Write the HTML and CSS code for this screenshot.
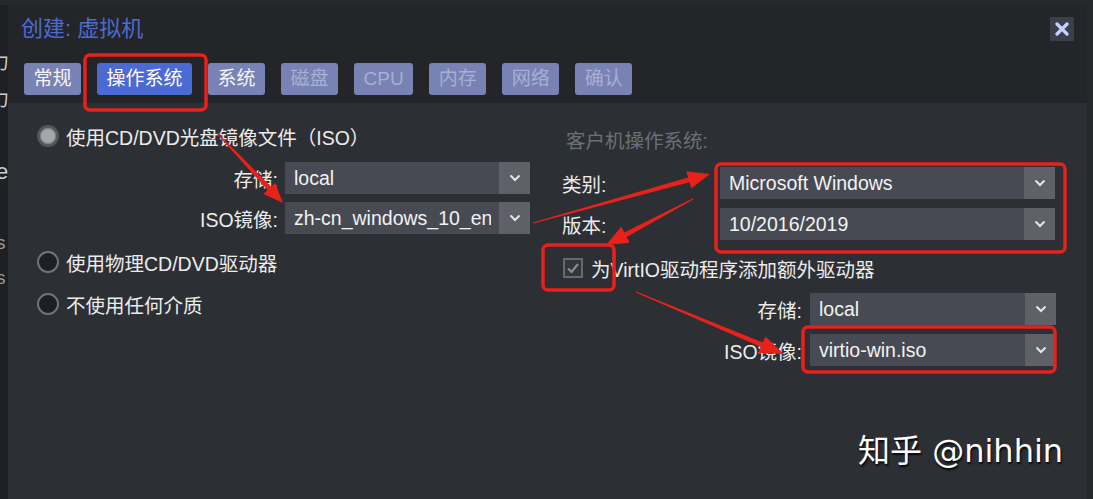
FILE: index.html
```html
<!DOCTYPE html>
<html lang="zh-CN">
<head>
<meta charset="utf-8">
<title>创建: 虚拟机</title>
<link rel="stylesheet" href="styles.css">
</head>
<body>
<div class="bg-strip">
  <span class="bg-glyph g1">力</span>
  <span class="bg-glyph g2">力</span>
  <span class="bg-glyph g3">e</span>
  <span class="bg-glyph g4">s</span>
  <span class="bg-glyph g5">s</span>
</div>
<div class="dialog">
  <div class="header">
    <div class="title-row">
      <span class="title">创建: 虚拟机</span>
      <button class="close" aria-label="close">
        <svg width="14" height="14" viewBox="0 0 14 14"><path d="M2 2 L12 12 M12 2 L2 12" stroke="#c4d2ff" stroke-width="3.2" stroke-linecap="round"/></svg>
      </button>
    </div>
    <div class="tabs">
      <span class="tab">常规</span>
      <span class="tab active">操作系统</span>
      <span class="tab">系统</span>
      <span class="tab disabled">磁盘</span>
      <span class="tab disabled">CPU</span>
      <span class="tab disabled">内存</span>
      <span class="tab disabled">网络</span>
      <span class="tab disabled">确认</span>
    </div>
  </div>
  <div class="body">
    <div class="col-left">
      <div class="radio-row first">
        <span class="radio checked"></span>
        <span>使用CD/DVD光盘镜像文件（ISO）</span>
      </div>
      <div class="form-row r-storage">
        <span class="label">存储:</span>
        <div class="select w245"><span class="val">local</span><span class="btn"><svg width="12" height="8" viewBox="0 0 12 8"><path d="M1.5 1.5 L6 6 L10.5 1.5" fill="none" stroke="#e6e6e6" stroke-width="2"/></svg></span></div>
      </div>
      <div class="form-row r-iso">
        <span class="label">ISO镜像:</span>
        <div class="select w245"><span class="val">zh-cn_windows_10_en</span><span class="btn"><svg width="12" height="8" viewBox="0 0 12 8"><path d="M1.5 1.5 L6 6 L10.5 1.5" fill="none" stroke="#e6e6e6" stroke-width="2"/></svg></span></div>
      </div>
      <div class="radio-row r2">
        <span class="radio"></span>
        <span>使用物理CD/DVD驱动器</span>
      </div>
      <div class="radio-row r3">
        <span class="radio"></span>
        <span>不使用任何介质</span>
      </div>
    </div>
    <div class="col-right">
      <div class="section-label">客户机操作系统:</div>
      <div class="kv-row k1">
        <span class="klabel">类别:</span>
        <div class="select w335"><span class="val">Microsoft Windows</span><span class="btn"><svg width="12" height="8" viewBox="0 0 12 8"><path d="M1.5 1.5 L6 6 L10.5 1.5" fill="none" stroke="#e6e6e6" stroke-width="2"/></svg></span></div>
      </div>
      <div class="kv-row k2">
        <span class="klabel">版本:</span>
        <div class="select w335"><span class="val">10/2016/2019</span><span class="btn"><svg width="12" height="8" viewBox="0 0 12 8"><path d="M1.5 1.5 L6 6 L10.5 1.5" fill="none" stroke="#e6e6e6" stroke-width="2"/></svg></span></div>
      </div>
      <div class="check-row">
        <span class="checkbox"><svg width="16" height="16" viewBox="0 0 16 16"><path d="M3 8.5 L6.5 12 L13 4" fill="none" stroke="#8d9095" stroke-width="2"/></svg></span>
        <span>为VirtIO驱动程序添加额外驱动器</span>
      </div>
      <div class="sub-row s1">
        <span class="label">存储:</span>
        <div class="select w246"><span class="val">local</span><span class="btn"><svg width="12" height="8" viewBox="0 0 12 8"><path d="M1.5 1.5 L6 6 L10.5 1.5" fill="none" stroke="#e6e6e6" stroke-width="2"/></svg></span></div>
      </div>
      <div class="sub-row s2">
        <span class="label">ISO镜像:</span>
        <div class="select w246"><span class="val">virtio-win.iso</span><span class="btn"><svg width="12" height="8" viewBox="0 0 12 8"><path d="M1.5 1.5 L6 6 L10.5 1.5" fill="none" stroke="#e6e6e6" stroke-width="2"/></svg></span></div>
      </div>
    </div>
  </div>
</div>
<div class="watermark">知乎 @nihhin</div>
<svg class="annot" width="1093" height="499" viewBox="0 0 1093 499">
  <g fill="none" stroke="#e8211b" stroke-width="3.5">
    <rect x="85" y="55" width="121" height="55" rx="5"/>
    <rect x="716" y="164" width="349" height="88" rx="5"/>
    <rect x="543" y="245" width="71" height="45" rx="5"/>
    <rect x="803" y="327" width="252" height="45" rx="5"/>
  </g>
  <g fill="#e8211b">
    <polygon points="216.6,133.4 217.4,132.6 271.1,186.7 275.1,182.9 283,203 263.5,193.9 267.5,190.1"/>
    <polygon points="533.2,223.6 532.8,222.4 688.1,177.5 686.4,171.2 710,174 691.2,188.6 689.5,182.3"/>
    <polygon points="692.7,198.5 693.3,199.5 626.6,236.9 629.6,242.7 606,245 621.2,226.7 624.2,232.5"/>
    <polygon points="635.8,292.6 636.2,291.4 762.9,342.4 765.4,336.4 784,354 758.4,353.0 760.9,347.0"/>
  </g>
</svg>
</body>
</html>
```

FILE: styles.css
```css
html, body {
  margin: 0;
  padding: 0;
}
body {
  width: 1093px;
  height: 499px;
  overflow: hidden;
  background: #26282c;
  font-family: "Liberation Sans", "Noto Sans CJK SC", sans-serif;
  font-size: 19.5px;
  color: #ececec;
  display: flex;
  align-items: flex-start;
  padding-top: 5px;
  box-sizing: border-box;
}
.bg-strip {
  width: 8px;
  height: 494px;
  flex: none;
  background: #1e2023;
  display: flex;
  flex-direction: column;
  overflow: hidden;
  color: #cfcfcf;
  font-size: 19px;
  line-height: 1;
}
.bg-glyph {
  display: block;
  margin-left: -10px;
}
.g1 { margin-top: 48px; }
.g2 { margin-top: 18px; }
.g3 { margin-top: 52px; font-size: 22px; margin-left: -4px; }
.g4 { margin-top: 50px; margin-left: -4px; color: #9a9a9a; }
.g5 { margin-top: 16px; margin-left: -4px; color: #9a9a9a; }

.dialog {
  width: 1079px;
  height: 494px;
  flex: none;
  display: flex;
  flex-direction: column;
  background: #2c2f34;
}
.header {
  height: 98px;
  background: #232529;
  box-sizing: border-box;
}
.title-row {
  display: flex;
  justify-content: space-between;
  align-items: center;
  padding: 12px 13px 0 13px;
  height: 24px;
}
.title {
  color: #4d6bd0;
  font-size: 22px;
  line-height: 24px;
}
.close {
  width: 24px;
  height: 24px;
  padding: 0;
  border: 0;
  background: #3a3f4b;
  display: flex;
  align-items: center;
  justify-content: center;
}
.tabs {
  display: flex;
  gap: 16px;
  margin-top: 22px;
  padding-left: 16px;
}
.tab {
  height: 32px;
  line-height: 32px;
  padding: 0 9.5px;
  border-radius: 3px;
  background: #7882b4;
  color: #f4f4f8;
  font-size: 19px;
}
.tab.active {
  background: #4b6ad3;
  color: #ffffff;
}
.tab.disabled {
  color: #a8b0d3;
}

.body {
  flex: 1;
  display: flex;
  gap: 32px;
  padding-left: 29px;
}
.col-left {
  width: 493px;
  display: flex;
  flex-direction: column;
  padding-top: 13px;
}
.col-right {
  width: 494px;
  display: flex;
  flex-direction: column;
  padding-top: 18px;
}
.radio-row {
  height: 40px;
  display: flex;
  align-items: center;
  gap: 7px;
}
.radio-row.r2 { margin-top: 8px; }
.radio-row.r3 { margin-top: 2px; }
.radio {
  width: 22px;
  height: 22px;
  flex: none;
  box-sizing: border-box;
  border-radius: 50%;
  border: 2px solid #6f7277;
  background: #1d1f22;
}
.radio.checked {
  border: 3px solid #55585d;
  background: #a6a7a9;
  box-shadow: inset 0 0 0 1px #7d7f83;
}
.form-row {
  display: flex;
  align-items: center;
  gap: 7px;
  height: 32px;
}
.form-row.r-storage { margin-top: 6px; }
.form-row.r-iso { margin-top: 8px; }
.form-row .label {
  width: 241px;
  text-align: right;
}
.select {
  height: 32px;
  display: flex;
  background: #474a52;
  color: #f2f2f2;
}
.select .val {
  flex: 1;
  min-width: 0;
  margin: 0 8px 0 9px;
  overflow: hidden;
  white-space: nowrap;
  line-height: 32px;
}
.select .btn {
  width: 31px;
  flex: none;
  background: #5e6168;
  display: flex;
  align-items: center;
  justify-content: center;
}
.w245 { width: 245px; }
.w246 { width: 246px; }
.w335 { width: 335px; }

.section-label {
  height: 40px;
  line-height: 40px;
  padding-left: 4px;
  color: #6c7077;
}
.kv-row {
  display: flex;
  align-items: center;
  height: 32px;
}
.kv-row.k1 { margin-top: 6px; }
.kv-row.k2 { margin-top: 9px; }
.klabel {
  width: 158px;
  flex: none;
}
.check-row {
  height: 32px;
  margin-top: 12px;
  display: flex;
  align-items: center;
  gap: 8px;
  padding-left: 1px;
}
.checkbox {
  width: 20px;
  height: 20px;
  flex: none;
  box-sizing: border-box;
  border: 2px solid #66696e;
  background: #33363b;
  display: flex;
  align-items: center;
  justify-content: center;
}
.sub-row {
  display: flex;
  align-items: center;
  gap: 8px;
  height: 32px;
  margin-top: 9px;
}
.sub-row .label {
  width: 240px;
  text-align: right;
}

.watermark {
  position: absolute;
  left: 858px;
  top: 432px;
  font-family: "DejaVu Sans", "Noto Sans CJK SC", sans-serif;
  font-size: 32px;
  line-height: 38px;
  color: #ffffff;
  text-shadow: 1px 2px 2px rgba(0, 0, 0, 0.85);
  white-space: nowrap;
}
.annot {
  position: absolute;
  left: 0;
  top: 0;
  pointer-events: none;
}
```
